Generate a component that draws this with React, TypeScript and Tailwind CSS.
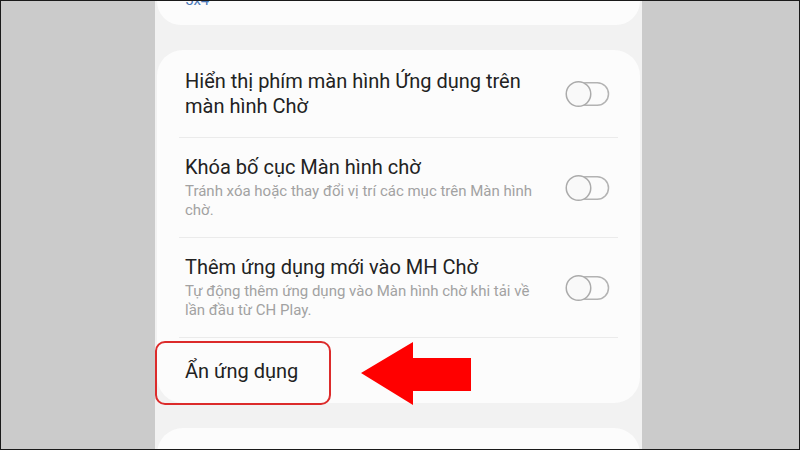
function Toggle() {
  return (
    <svg width="46" height="28" viewBox="0 0 46 28" className="shrink-0">
      <rect x="10" y="2.75" width="33.5" height="22.5" rx="11.25" fill="#fbfbfb" stroke="#b3b3b3" strokeWidth="1.5" />
      <circle cx="13.5" cy="14" r="12.25" fill="#f9f9f9" stroke="#ababab" strokeWidth="1.5" />
    </svg>
  );
}

type Row = { title: string[]; sub?: string[]; toggle?: boolean; pt: string; pb: string };

const rows: Row[] = [
  { title: ['Hiển thị phím màn hình Ứng dụng trên', 'màn hình Chờ'], toggle: true, pt: 'pt-[19px]', pb: 'pb-[18px]' },
  {
    title: ['Khóa bố cục Màn hình chờ'],
    sub: ['Tránh xóa hoặc thay đổi vị trí các mục trên Màn hình', 'chờ.'],
    toggle: true,
    pt: 'pt-[17px]',
    pb: 'pb-[17px]',
  },
  {
    title: ['Thêm ứng dụng mới vào MH Chờ'],
    sub: ['Tự động thêm ứng dụng vào Màn hình chờ khi tải về', 'lần đầu từ CH Play.'],
    toggle: true,
    pt: 'pt-[17px]',
    pb: 'pb-[17px]',
  },
];

export default function App() {
  return (
    <div
      className="relative flex w-[800px] h-[450px] overflow-hidden border border-[#1a1a1a] bg-[#cbcbcb]"
      style={{ fontFamily: 'Roboto, "Noto Sans", sans-serif' }}
    >
      <div className="w-[154px] shrink-0" />
      <div className="flex w-[487px] shrink-0 flex-col gap-[25px] bg-[#f2f2f2] px-[2px]">
        {/* top card, cut off */}
        <div className="h-[24px] shrink-0 overflow-hidden rounded-b-[26px] bg-[#fcfcfc] pl-[28px]">
          <div className="-mt-[10px] text-[15px] leading-[19px] text-[#4a78b8]">5x4</div>
        </div>

        {/* settings card */}
        <div className="shrink-0 rounded-[26px] bg-[#fcfcfc]">
          {rows.map((r, i) => (
            <div key={i}>
              <div className={`flex items-center justify-between pl-[28px] pr-[29px] ${r.pt} ${r.pb}`}>
                <div className="w-[370px]">
                  {r.title.map((t) => (
                    <div key={t} className="whitespace-nowrap text-[20px] leading-[25px] text-[#222222]">
                      {t}
                    </div>
                  ))}
                  {r.sub && (
                    <div className="mt-[2px]">
                      {r.sub.map((s) => (
                        <div key={s} className="whitespace-nowrap text-[15px] leading-[19px] text-[#a2a2a2]">
                          {s}
                        </div>
                      ))}
                    </div>
                  )}
                </div>
                {r.toggle && <Toggle />}
              </div>
              <div className="mx-[22px] h-px bg-[#ebebeb]" />
            </div>
          ))}
          <div className="pl-[28px] pt-[21px] pb-[19px]">
            <div className="text-[20px] leading-[25px] text-[#222222]">Ẩn ứng dụng</div>
          </div>
        </div>

        {/* next card, cut off */}
        <div className="h-[40px] shrink-0 rounded-t-[26px] bg-[#fcfcfc]" />
      </div>

      {/* annotation: red frame */}
      <div className="absolute left-[154px] top-[340px] h-[64px] w-[176px] rounded-[10px] border-2 border-[#dc2b2b]" />

      {/* annotation: red arrow */}
      <svg className="absolute left-[359px] top-[340px]" width="112" height="66" viewBox="0 0 112 66">
        <polygon points="1,32 53,1 53,17 111,17 111,50 53,50 53,64" fill="#ff0000" />
      </svg>
    </div>
  );
}
